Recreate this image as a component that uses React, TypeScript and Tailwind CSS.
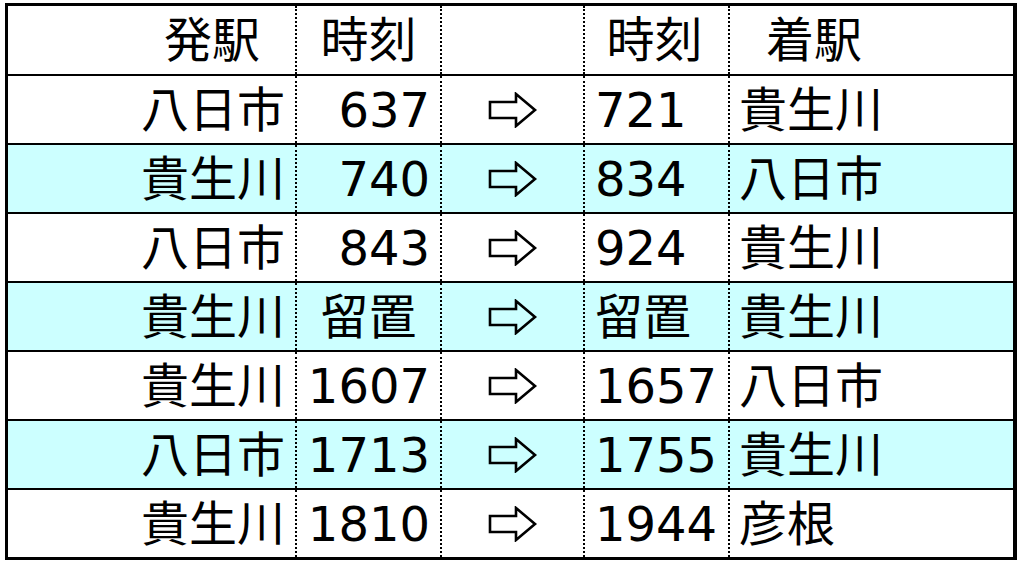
import React from "react";

type Row = { from: string; dep: string; arr: string; to: string; cyan: boolean };

const rows: Row[] = [
  { from: "八日市", dep: "637", arr: "721", to: "貴生川", cyan: false },
  { from: "貴生川", dep: "740", arr: "834", to: "八日市", cyan: true },
  { from: "八日市", dep: "843", arr: "924", to: "貴生川", cyan: false },
  { from: "貴生川", dep: "留置", arr: "留置", to: "貴生川", cyan: true },
  { from: "貴生川", dep: "1607", arr: "1657", to: "八日市", cyan: false },
  { from: "八日市", dep: "1713", arr: "1755", to: "貴生川", cyan: true },
  { from: "貴生川", dep: "1810", arr: "1944", to: "彦根", cyan: false },
];

function Arrow() {
  return (
    <svg width="50" height="36" viewBox="0 0 50 36" className="block">
      <path
        d="M2 10 H28 V2 L47 18 L28 34 V26 H2 Z"
        fill="none"
        stroke="#000"
        strokeWidth="2.6"
        strokeLinejoin="miter"
      />
    </svg>
  );
}

const isNum = (s: string) => /^\d+$/.test(s);

export default function App() {
  const font = "font-['DejaVu_Sans','Noto_Sans_CJK_JP',sans-serif]";
  return (
    <div className={`w-[1024px] h-[568px] bg-white pt-[3px] pl-[5px] ${font} text-[48px] leading-none text-black`}>
      <div className="w-[1012px] border-t-[3px] border-l-[3px] border-r-[4px] border-b-[3px] border-black">
        {/* header */}
        <div className="flex h-[68px]">
          <div className="w-[287px] flex items-center justify-end pr-[35px]">発駅</div>
          <div className="w-[145px] border-l-2 border-dotted border-black flex items-center justify-center">時刻</div>
          <div className="w-[143px] border-l-2 border-dotted border-black"></div>
          <div className="w-[145px] border-l-2 border-dotted border-black flex items-center justify-center pr-[4px]">時刻</div>
          <div className="w-[285px] border-l-2 border-dotted border-black flex items-center pl-[36px]">着駅</div>
        </div>
        {rows.map((r, i) => (
          <div
            key={i}
            className={`flex h-[69px] border-t-2 border-black ${r.cyan ? "bg-[#ccffff]" : "bg-white"}`}
          >
            <div className="w-[287px] flex items-center justify-end pr-[10px]">{r.from}</div>
            <div
              className={`w-[145px] border-l-2 border-dotted border-black flex items-center ${
                isNum(r.dep) ? "justify-end pr-[10px]" : "justify-center"
              }`}
            >
              {r.dep}
            </div>
            <div className="w-[143px] border-l-2 border-dotted border-black flex items-center justify-center">
              <Arrow />
            </div>
            <div className="w-[145px] border-l-2 border-dotted border-black flex items-center pl-[10px]">{r.arr}</div>
            <div className="w-[285px] border-l-2 border-dotted border-black flex items-center pl-[9px]">{r.to}</div>
          </div>
        ))}
      </div>
    </div>
  );
}
